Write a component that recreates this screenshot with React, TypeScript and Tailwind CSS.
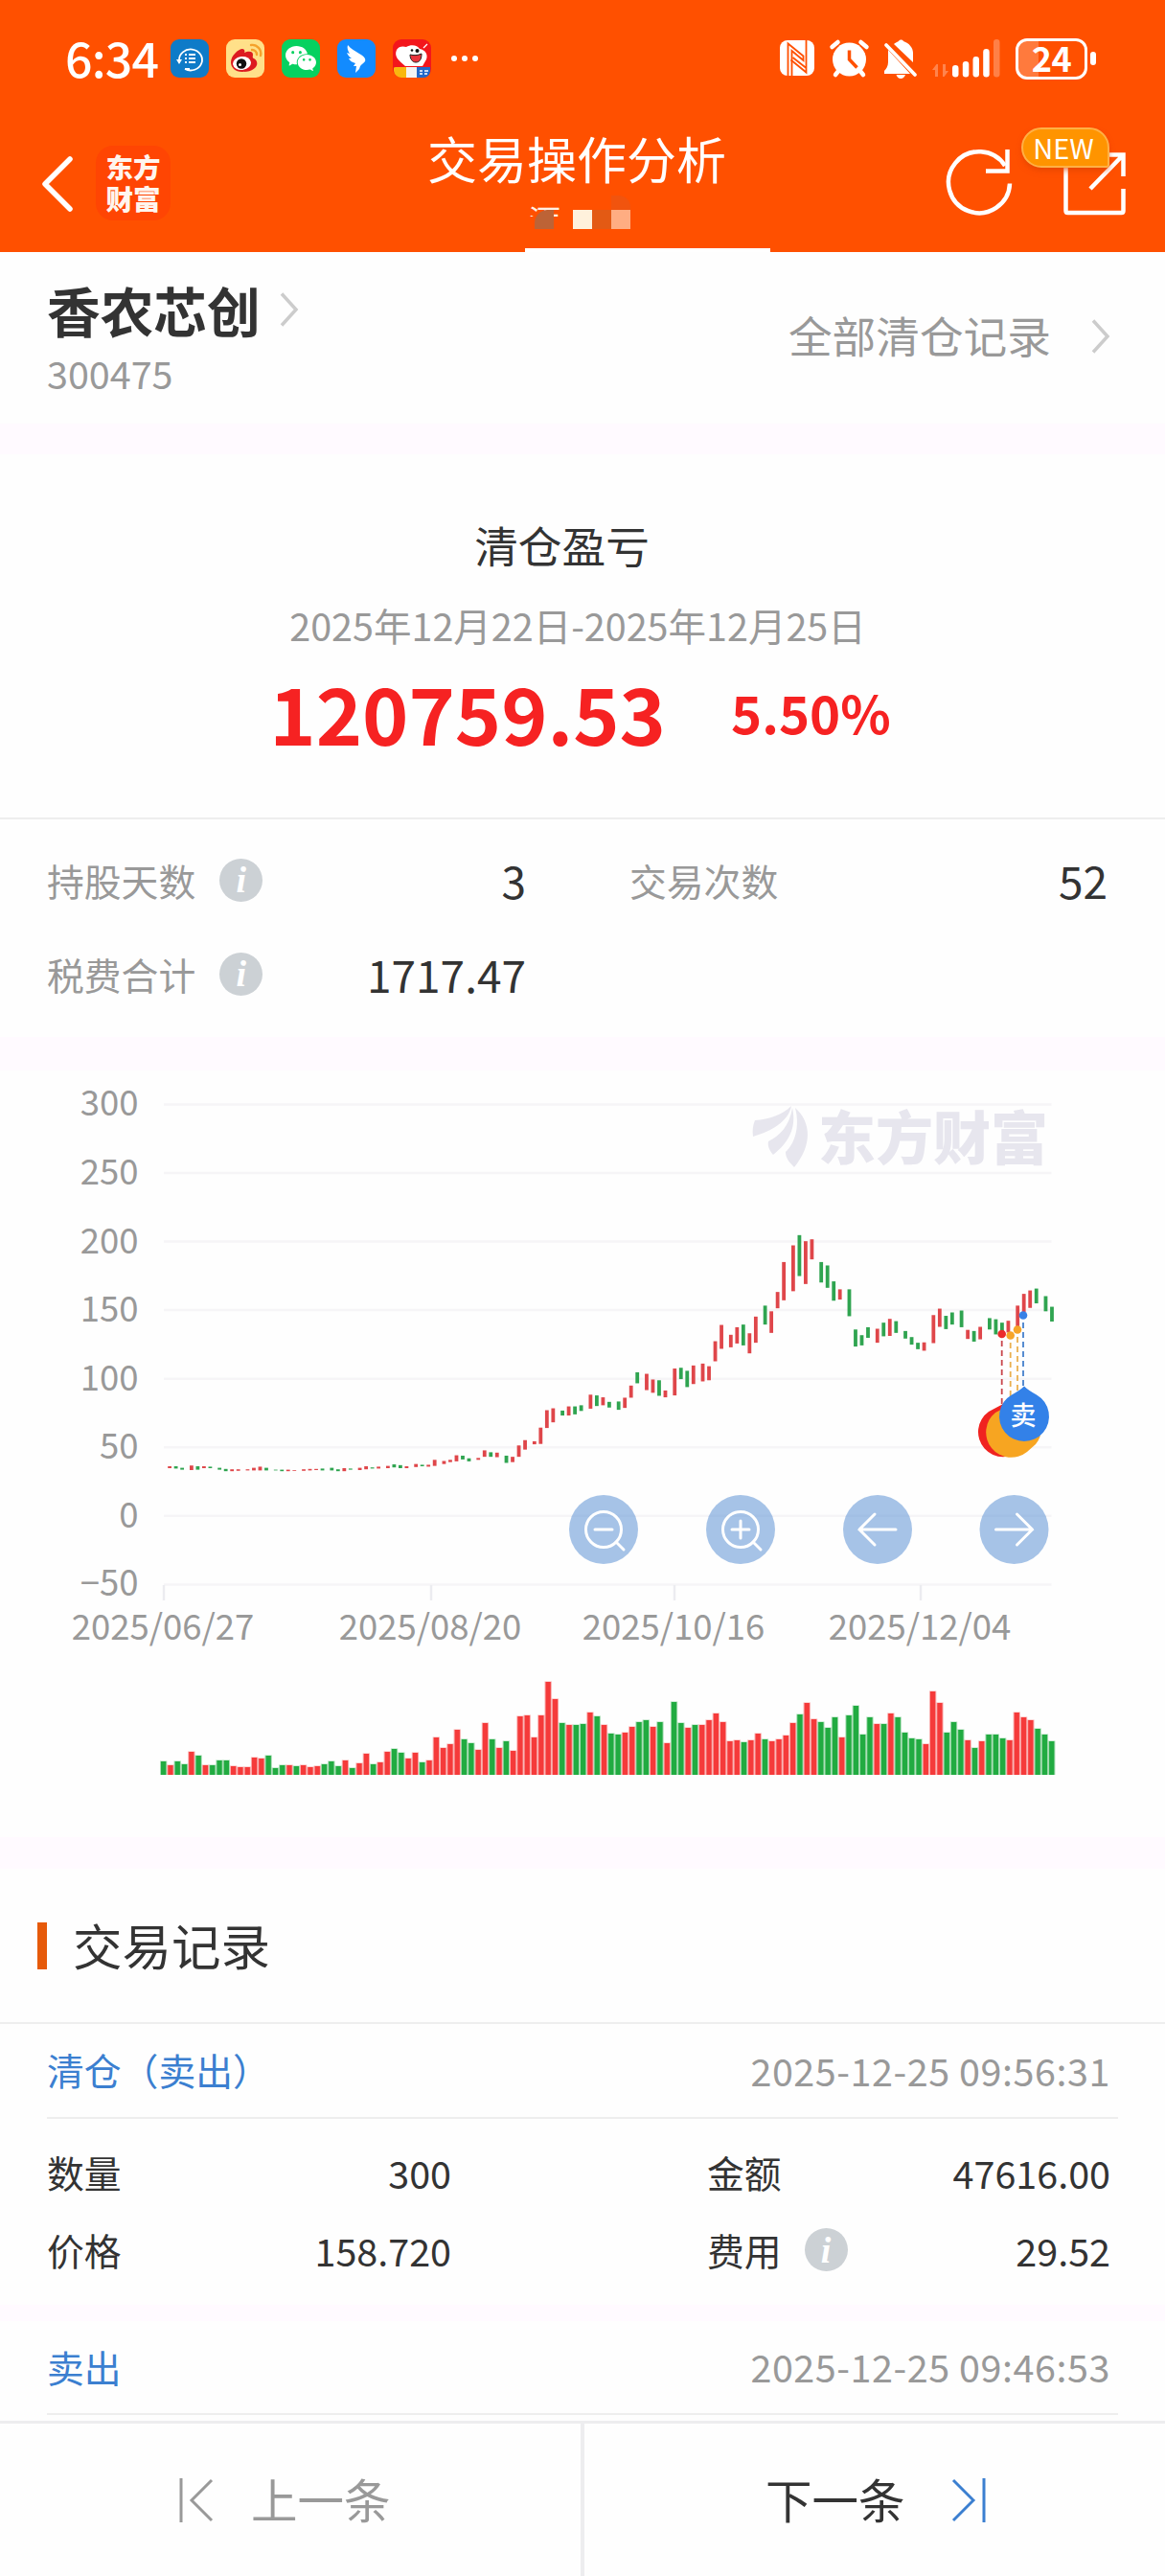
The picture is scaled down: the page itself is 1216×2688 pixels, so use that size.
import type { ReactNode } from 'react';
import { IoLogoWechat } from 'react-icons/io5';

// candle bodies, "<r|g><top>-<bottom>" in plot units (181 units = 50 on the price axis)
const CANDLES = `
r1037-1042 g1037-1043 g1041-1046 r1035-1047 g1037-1046 r1037-1042 g1038-1042 g1041-1046 g1044-1050 r1045-1050
r1045-1049 r1045-1048 r1041-1048 r1038-1048 g1041-1048 g1046-1048 g1046-1050 r1046-1050 r1047-1049 r1045-1049
r1044-1048 r1044-1047 g1043-1048 g1041-1048 g1045-1050 r1042-1050 g1043-1046 r1041-1047 r1037-1045 g1040-1043
r1038-1043 r1036-1042 g1032-1040 g1034-1042 r1037-1042 r1031-1039 g1033-1037 r1033-1038 r1020-1036 r1023-1031
r1020-1026 r1008-1024 g1009-1019 g1016-1024 r1015-1020 r995-1012 g1000-1012 r1001-1013 g1009-1028 r1012-1026
r982-1012 r968-993 r971-979 r935-978 r889-936 r884-921 g890-903 r879-903 g879-900 g876-891
r848-885 g850-878 r855-876 g867-882 g866-888 r856-883 r824-856 g789-818 r793-836 r808-843
g810-851 r837-855 r779-850 g777-807 g785-828 r771-820 r766-813 r773-810 r707-760 r664-727
r690-723 r670-713 g663-718 r686-739 r642-711 g613-663 r628-685 r577-620 r498-599 r454-575
g427-535 r443-556 r438-491 g498-552 g507-566 g549-600 r570-597 g570-641 g676-721 g691-718
g670-698 r674-711 g658-694 r648-693 g654-685 g680-700 g696-716 g711-728 r710-732 r638-712
r621-669 g640-675 g631-663 g626-670 r677-701 g680-708 r669-702 g646-676 g649-689 g658-688
r653-684 r613-668 r582-630 r573-619 g568-607 g588-628 g616-655
`.trim().split(/\s+/);

// volume bars, "<r|g><height>"
const VOLUMES = `
g14 r10 g14 g11 r24 g20 r10 g10 g15 g15 r9 r8 r8 r18 r17 g20 g7 g10 r10 g9 r10 r8 r9 g11 g14 g9 r15 g7 r12 r22
g11 r13 r24 g27 g23 r17 r23 g13 r15 r39 r28 r32 r47 g37 g33 r26 r54 g37 r28 g35 r25 r61 r62 r39 r62 r97 r79 g54
r52 g52 g53 r65 g61 r52 g43 g42 r44 r50 g55 g57 r50 g55 r33 g76 g54 r49 g52 r52 r57 r64 r55 r35 r36 g34 r36 r43
g37 r35 r37 r41 r54 g63 r75 r58 g55 g49 g60 r39 g62 g72 g42 g60 r53 g53 r64 g60 g44 g38 g37 r32 r87 r75 g44 g55
g47 r36 g28 r35 g42 g42 g38 r36 r65 r60 r57 g48 g42 g35
`.trim().split(/\s+/);

const PRICE_TICKS = [300, 250, 200, 150, 100, 50, 0, -50];

const DATE_TICKS = [
  { x: 171, label: '2025/06/27' },
  { x: 450, label: '2025/08/20' },
  { x: 704, label: '2025/10/16' },
  { x: 961, label: '2025/12/04' },
];

const gridY = (i: number) => 35.4 + i * 71.57;
const plotY = (v: number) => v * 0.3954 + 3;
const candleX = (i: number) => 177.1 + Math.round(i * 2.24402) * 3.254;

function StatusBar() {
  return (
    <div className="flex h-[122px] items-center pl-[68px] pr-[72px] text-white">
      <span className="-mt-1 w-[110px] text-[50px] font-medium leading-[50px] tracking-[-0.8px]">6:34</span>
      <div className="flex gap-[18px]">
        <svg width="40" height="40" viewBox="0 0 40 40">
          <rect width="40" height="40" rx="9" fill="#0e7bc8" />
          <path d="M9 22a12 11 0 1 1 6 9M15 31h5" fill="none" stroke="#fff" strokeWidth="1.8" />
          <path d="M6 21h6l-3 5z" fill="#fff" />
          <path d="M15 16h2m2 0h7M15 20h2m2 0h7M15 24h2m2 0h7" stroke="#fff" strokeWidth="2" />
        </svg>
        <svg width="40" height="40" viewBox="0 0 40 40">
          <rect width="40" height="40" rx="9" fill="#ffe089" />
          <path d="M5 24c0-7 8-14 12-14 2 0 3 2 2 4 4-2 9-2 9 2 0 2-1 3 1 4 7 4 3 14-12 14C9 34 5 29 5 24z" fill="#dd1a20" />
          <ellipse cx="16.5" cy="25" rx="9.5" ry="7" fill="#fff" transform="rotate(-8 16.5 25)" />
          <circle cx="16" cy="25.5" r="5.2" fill="#111" />
          <circle cx="14.5" cy="26.5" r="1.5" fill="#fff" />
          <path d="M26 6a9 9 0 0 1 10 11M27 11a5 5 0 0 1 5 5" fill="none" stroke="#f5a22c" strokeWidth="2.4" strokeLinecap="round" />
        </svg>
        <span className="flex size-10 items-center justify-center rounded-[9px] bg-[#06d160]">
          <IoLogoWechat className="size-[32px]" />
        </span>
        <svg width="40" height="40" viewBox="0 0 40 40">
          <rect width="40" height="40" rx="9" fill="#128bff" />
          <path d="M11 6c3 4 8 6 12 9 5 3 7 5 6 8-1 2-4 3-5 5l-1 3-4 4 1-7h-3l2-3c-4-1-6-3-7-5l3 0c-3-2-4-4-5-6l3 1c-2-3-3-6-2-9z" fill="#fff" />
        </svg>
        <svg width="40" height="40" viewBox="0 0 40 40">
          <rect width="40" height="40" rx="9" fill="#f3161c" />
          <path d="M13 28C6 22 1 18 4 11c2-4 7-4 10-3 5-3 12-2 14 2 6 1 9 6 7 11l-4 7z" fill="#fff" />
          <path d="M18 16c4 1 8 1 12-1 0 6-2 9-6 9s-6-4-6-8z" fill="#e8333c" stroke="#222" />
          <circle cx="20" cy="11.5" r="1.3" fill="#111" />
          <circle cx="25.5" cy="12" r="2" fill="#111" />
          <path d="M1 30q0-1 2-1h11v11H9a8 8 0 0 1-8-7z" fill="#f9b80f" />
          <path d="M14 29h11v11H14z" fill="#f3f3f3" />
          <path d="M25 29h14v4a7 7 0 0 1-7 7h-7z" fill="#2268c9" />
          <path d="M28 33h3m2 0h4m-9 3h3m2 0h3M32 9l4-4" stroke="#fff" strokeWidth="1.3" />
        </svg>
      </div>
      <svg className="ml-5" width="30" height="8" viewBox="0 0 30 8" fill="#fff">
        <circle cx="4" cy="4" r="3" />
        <circle cx="15" cy="4" r="3" />
        <circle cx="26" cy="4" r="3" />
      </svg>

      <svg className="ml-auto" width="246" height="44" viewBox="0 0 246 44" fill="none" stroke="#fff">
        {/* nfc */}
        <g transform="translate(0 3)">
          <rect width="36" height="37" rx="8" fill="#fff" stroke="none" />
          <path d="M8.500 37V3.500l16 13V21L12.500 11v26" stroke="#ff5000" strokeWidth="1.8" />
          <path d="M27.500 0v33.500l-16-13M27.500 29l-14-11" stroke="#ff5000" strokeWidth="1.8" />
        </g>
        {/* alarm */}
        <g transform="translate(52 2)">
          <circle cx="20.5" cy="21" r="17.5" fill="#fff" stroke="none" />
          <path d="M2.500 8l6-5M38.500 8l-6-5M6 37l4-5M35 37l-4-5" strokeWidth="4.5" strokeLinecap="round" />
          <path d="M20.500 11.500V21l8 8.500" stroke="#ff5000" strokeWidth="3.5" />
        </g>
        {/* muted bell */}
        <g transform="translate(108 2)">
          <path d="M11 5c1-1 3-2 5-3 1-2 4-2 5 0 6 2 10 7 10 12v10zM5 11l23 25H1v-3c2-2 4-5 4-9z" fill="#fff" stroke="none" />
          <path d="M3 6l30 31" strokeWidth="3.8" strokeLinecap="round" />
          <path d="M13.500 37h9.500q-1.500 4-4.800 4t-4.700-4z" fill="#fff" stroke="none" />
        </g>
        {/* signal */}
        <g transform="translate(159 0)" fill="#fff" stroke="none">
          <path d="M4.500 28L0 34h3v7h3V28zM12.500 41l4.500-6h-3v-7h-3v13z" opacity=".3" />
          <rect x="21" y="29" width="6.5" height="12.5" rx="3.2" />
          <rect x="31.8" y="25" width="6.5" height="16.5" rx="3.2" />
          <rect x="42.5" y="20" width="6.5" height="21.5" rx="3.2" />
          <rect x="53.2" y="12" width="6.5" height="29.5" rx="3.2" />
          <rect x="64" y="2" width="6.5" height="39.5" rx="3.2" opacity=".28" />
        </g>
      </svg>
      {/* battery */}
      <div className="flex h-[43px] w-[75px] items-center justify-center rounded-[12px] border-[3px] border-white bg-linear-to-r from-[#ff7a3d] from-30% to-transparent to-30% text-[36px] font-bold leading-[37px] tracking-[-0.5px]">
        <span className="-mt-1">24</span>
      </div>
      <i className="ml-[3px] h-[14px] w-[6px] rounded-full bg-white" />
    </div>
  );
}

function TitleBar() {
  return (
    <div className="relative flex h-[141px] items-start pl-[42px] pr-[36px]">
      <svg className="mt-[41px]" width="34" height="58" viewBox="0 0 34 58" fill="none" stroke="#fff" strokeWidth="5.5">
        <path d="M31 3L5 29l26 26" strokeLinejoin="round" strokeLinecap="round" />
      </svg>
      <div className="ml-[24px] mt-[30px] flex h-[78px] w-[78px] items-center justify-center rounded-[18px] bg-[#ff4503] px-[10px] pb-[3px] text-center text-[28.5px] font-black leading-[33px] text-[#fff5ee]">
        东方财富
      </div>
      <h1 className="ml-[268px] mt-[13px] text-[52px] leading-[60px] text-white">交易操作分析</h1>
      <svg className="ml-auto mt-[8px]" width="196" height="98" viewBox="0 0 196 98" fill="none" stroke="#fff" strokeWidth="4.5">
        <path d="M70 61.500A32 32 0 1 1 65 43" />
        <path d="M67.500 26v22.500H45" />
        <path d="M128.500 42v48q0 2 2 2h56q2 0 2-2V67M168 31.500h20.500V54M187 33l-33 34" />
      </svg>
      <span className="absolute left-[1066px] top-[11px] flex h-[42px] w-[92px] items-center justify-center rounded-[21px] rounded-br-[3px] border-2 border-[#ffb045] bg-[#ff9400] pb-[2px] pr-1 text-[29px] leading-none text-white shadow-md shadow-[#d94400]/50">
        NEW
      </span>
      {/* account name, masked by mosaic blocks */}
      <span className="absolute left-[552px] top-[89px] h-[15px] w-[33px] overflow-hidden text-[33px] leading-[36px] text-[#fff0e4]">酒</span>
      <div className="absolute left-[558px] top-[97px] flex">
        <i className="size-5 rounded-tl-[14px] bg-[#bd6336]" />
        <i className="ml-5 size-5 bg-[#fff1dc]" />
        <i className="size-5 bg-[#e35a14]" />
        <i className="size-5 bg-[#ffad82]" />
      </div>
      <i className="absolute left-[638px] top-[82px] h-[15px] w-5 rounded-tr-[12px] bg-[#f1540e]" />
      <i className="absolute bottom-0 left-[548px] h-1 w-[256px] bg-white" />
    </div>
  );
}

function Chevron() {
  return (
    <svg width="20" height="36" viewBox="0 0 20 36" fill="none" stroke="#ccc" strokeWidth="3.5">
      <path d="M2 1.500L17 18 2 34.500" />
    </svg>
  );
}

function InfoIcon() {
  return (
    <span className="flex size-[45px] items-center justify-center rounded-full bg-[#ccd1d5] font-['Liberation_Serif',serif] text-[38px] font-bold italic leading-none text-white">
      i
    </span>
  );
}

const Gap = ({ className }: { className: string }) => <div className={`shrink-0 bg-[#fffaff] ${className}`} />;

function Stat({ label, value, info }: { label: string; value: string; info?: boolean }) {
  return (
    <div className="flex h-[98px] items-center">
      <span className="mr-[25px] text-[38.8px] text-[#999]">{label}</span>
      {info && <InfoIcon />}
      <span className="ml-auto text-[46px]">{value}</span>
    </div>
  );
}

function ChartButton({ x, children }: { x: number; children: ReactNode }) {
  return (
    <g transform={`translate(${x} 479)`} fill="none" stroke="#fff" strokeWidth="3" strokeLinecap="round">
      <circle r="36" fill="#4783cf" fillOpacity=".48" stroke="none" />
      {children}
    </g>
  );
}

function PriceChart() {
  return (
    <svg width="1216" height="800" viewBox="0 0 1216 800" className="block shrink-0">
      {PRICE_TICKS.map((tick, i) => (
        <g key={tick}>
          <path d={`M171 ${gridY(i)}H1097.500`} stroke="#f6f5f7" strokeWidth="2.5" />
          <text x="144.5" y={gridY(i) + 12} textAnchor="end" fill="#999" className="text-[36.5px]">
            {String(tick).replace('-', '−')}
          </text>
        </g>
      ))}
      {DATE_TICKS.map(({ x, label }) => (
        <g key={label}>
          <path d={`M${x} 537v16`} stroke="#ececf0" strokeWidth="2.5" />
          <text x={x - 1} y="594" textAnchor="middle" fill="#999" className="text-[36.5px]">{label}</text>
        </g>
      ))}

      {/* watermark */}
      <g fill="#e7e6ee">
        <path d="M786 69c-1-7 0-12 2-17 15-1 29-6 38-15-3 16-20 26-40 32z" />
        <path d="M807 88c-4-5-6-9-5-14 12-6 22-16 25-35 5 22-5 37-20 49z" />
        <path d="M829 101c-6-6-9-10-9-16 10-9 15-27 10-46 17 15 18 39-1 62z" />
        <text x="854" y="93" className="text-[60px] font-black">东方财富</text>
      </g>

      {CANDLES.map((c, i) => {
        const [top, bottom] = c.slice(1).split('-').map(Number);
        return (
          <rect
            key={i}
            x={candleX(i) - 1.9}
            y={plotY(top)}
            width="3.8"
            height={plotY(bottom) - plotY(top)}
            fill={c[0] === 'r' ? '#df464a' : '#2fa450'}
          />
        );
      })}

      {/* trade markers */}
      <g fill="none" strokeWidth="1.8" strokeDasharray="6 4">
        <path d="M1045.700 282v72" stroke="#c9474d" />
        <path d="M1054.700 284v56" stroke="#eab04f" />
        <path d="M1062 278v60" stroke="#eab04f" />
        <path d="M1068 263v70" stroke="#4580cc" />
      </g>
      <circle cx="1045.7" cy="275" r="4.3" fill="#ec2a2c" />
      <circle cx="1054.7" cy="276.5" r="4.3" fill="#f6a428" />
      <circle cx="1062" cy="270.5" r="4.3" fill="#f6a428" />
      <circle cx="1068" cy="255.5" r="4.3" fill="#3781e6" />
      <path d="M1047 348l15 8a26 26 0 1 1-30 0z" fill="#f02320" />
      <path d="M1062 345l14 10c12 10 14 25 5 35l-9 8a26 26 0 1 1-33-41z" fill="#f7a521" />
      <path d="M1069 329.500q4 4 13 9a26 26 0 1 1-26 0q9-5 13-9z" fill="#3381e8" />
      <text x="1068" y="370" textAnchor="middle" fill="#fff" className="text-[27px] font-medium">卖</text>

      <ChartButton x={630}>
        <circle r="18.5" />
        <path d="M-9 0H9M13 13l8 8" />
      </ChartButton>
      <ChartButton x={773}>
        <circle r="18.5" />
        <path d="M-9 0H9M0-9V9M13 13l8 8" />
      </ChartButton>
      <ChartButton x={916}>
        <path d="M19 0h-38M-3-16L-19 0-3 16" />
      </ChartButton>
      <ChartButton x={1058.5}>
        <path d="M-19 0h38M3-16L19 0 3 16" />
      </ChartButton>

      {VOLUMES.map((v, i) => {
        const h = Number(v.slice(1));
        return (
          <g key={i} fill={v[0] === 'r' ? '#f53a3a' : '#21ab41'}>
            <rect x={167 + i * 7.3} y={734.5 - h} width="7.3" height={h + 0.5} opacity=".4" />
            <rect x={168 + i * 7.3} y={735 - h} width="5.3" height={h} />
          </g>
        );
      })}
    </svg>
  );
}

function RecordHead({ type, time }: { type: string; time: string }) {
  return (
    <div className="mx-[49px] flex items-center justify-between border-b-2 border-[#eee] pb-[2px] pr-[8px] text-[38.8px] text-[#999]">
      <span className="text-[#3b7fd0]">{type}</span>
      <span className="text-[39.5px] tracking-[0.55px]">{time}</span>
    </div>
  );
}

function Cell({ label, value, info }: { label: string; value: string; info?: boolean }) {
  return (
    <div className="flex h-[81px] items-center">
      <span className="mr-6 text-[38.8px]">{label}</span>
      {info && <InfoIcon />}
      <span className="ml-auto text-[39.5px]">{value}</span>
    </div>
  );
}

export default function App() {
  return (
    <div className="flex h-[2688px] w-[1216px] flex-col overflow-hidden bg-[#fefefe] font-['Noto_Sans_CJK_SC',sans-serif] leading-none text-[#333]">
      <header className="h-[263px] shrink-0 bg-[#ff5000]">
        <StatusBar />
        <TitleBar />
      </header>

      <section className="flex h-[179px] shrink-0 justify-between pl-[49px] pr-[57px]">
        <div>
          <div className="mt-[31px] flex items-center gap-[20px]">
            <h2 className="text-[55.7px] font-bold leading-[58px]">香农芯创</h2>
            <Chevron />
          </div>
          <p className="mt-[17px] text-[39.5px] leading-[40px] text-[#999]">300475</p>
        </div>
        <div className="mt-[63px] flex h-[50px] items-center gap-[42px] text-[45.7px] text-[#999]">
          <span className="-mt-[2px]">全部清仓记录</span>
          <Chevron />
        </div>
      </section>
      <Gap className="h-8" />

      <section className="flex h-[379px] shrink-0 flex-col items-center">
        <h3 className="mr-[43px] mt-[69px] text-[45.7px] leading-[50px]">清仓盈亏</h3>
        <p className="mr-[10px] mt-[39px] text-[39.5px] leading-[40px] text-[#999]">2025年12月22日-2025年12月25日</p>
        <div className="mr-[5px] mt-[27px] flex h-[88px] items-center gap-[68px] font-bold text-[#f62222]">
          <span className="text-[82px]">120759.53</span>
          <span className="text-[54.5px]">5.50%</span>
        </div>
      </section>
      <section className="grid h-[229px] shrink-0 grid-cols-[500px_499px] content-start gap-x-[108px] border-t-2 border-[#eee] pl-[49px] pt-[14px]">
        <Stat label="持股天数" value="3" info />
        <Stat label="交易次数" value="52" />
        <Stat label="税费合计" value="1717.47" info />
      </section>
      <Gap className="h-[35px]" />

      <PriceChart />
      <Gap className="h-[33px]" />

      <section className="flex h-[162px] shrink-0 items-center gap-[27px] border-b-2 border-[#eee] pl-[39px]">
        <i className="h-[49px] w-[10px] bg-[#e65a0a]" />
        <h3 className="-mt-[3px] text-[51.5px]">交易记录</h3>
      </section>
      <section className="shrink-0">
        <div className="grid h-[99px]">
          <RecordHead type="清仓（卖出）" time="2025-12-25 09:56:31" />
        </div>
        <div className="grid h-[194px] grid-cols-[422px_421px] content-start gap-x-[267px] pl-[49px] pt-[15px]">
          <Cell label="数量" value="300" />
          <Cell label="金额" value="47616.00" />
          <Cell label="价格" value="158.720" />
          <Cell label="费用" value="29.52" info />
        </div>
      </section>
      <Gap className="h-[17px]" />
      <section className="grid h-[98px] shrink-0">
        <RecordHead type="卖出" time="2025-12-25 09:46:53" />
      </section>

      <footer className="mt-auto grid h-[162px] shrink-0 grid-cols-2 border-t-3 border-[#ededef] text-[48.5px]">
        <div className="flex items-center border-r-2 border-[#ededef] pl-[186px] text-[#999]">
          <svg width="38" height="46" viewBox="0 0 38 46" fill="none" stroke="#999" strokeWidth="3">
            <path d="M3 0v46M35 2L14 23l21 21" />
          </svg>
          <span className="-mt-[3px] ml-[38px]">上一条</span>
        </div>
        <div className="flex items-center border-l-2 border-[#ededef] pl-[189px]">
          <span className="-mt-[3px]">下一条</span>
          <svg className="ml-[47px]" width="38" height="46" viewBox="0 0 38 46" fill="none" stroke="#3b7fd0" strokeWidth="3">
            <path d="M3 2l21 21L3 44M35 0v46" />
          </svg>
        </div>
      </footer>
    </div>
  );
}
